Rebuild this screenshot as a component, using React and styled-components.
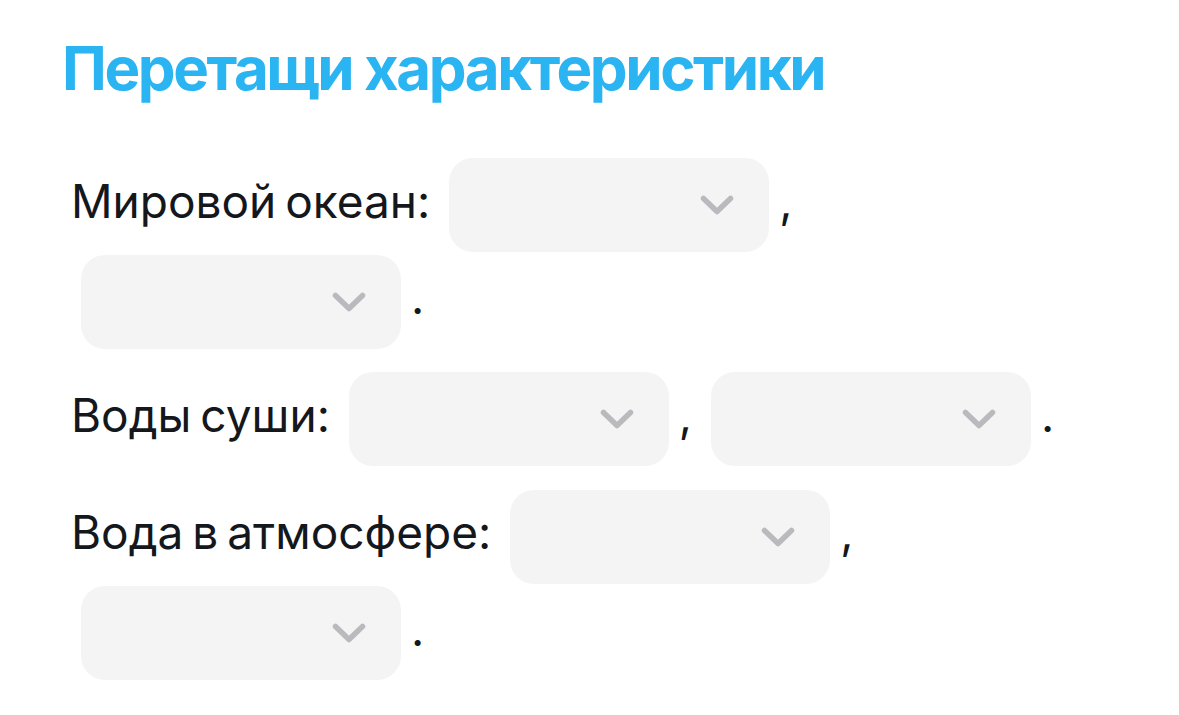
import styled, { createGlobalStyle } from 'styled-components';

const GlobalStyle = createGlobalStyle`
  body {
    margin: 0;
    background: #ffffff;
    font-family: Inter, "Noto Sans", sans-serif;
  }
`
const Page = styled.div`
  padding: 31px 60px 0 60px;
  width: 1040px;
`
const Title = styled.h1`
  margin: 0 0 0 2px;
  font-size: 60px;
  line-height: 74px;
  font-weight: 700;
  letter-spacing: -2.4px;
  color: #2bb4f2;
`
const Exercise = styled.div`
  display: flex;
  flex-direction: column;
  gap: 21px;
  margin-top: 51px;
  padding-left: 11px;
`
const Sentence = styled.p`
  margin: 0;
  font-size: 46px;
  line-height: 90px;
  font-weight: 400;
  word-spacing: -4px;
  color: #14171c;
`
const Slot = styled.span`
  white-space: nowrap;
`
const Select = styled.span`
  display: inline-flex;
  align-items: center;
  justify-content: flex-end;
  box-sizing: border-box;
  width: 320px;
  height: 94px;
  margin: 0 10px;
  padding-right: 35px;
  vertical-align: middle;
  background: #f4f4f5;
  border-radius: 24px;
  cursor: pointer;
`

function Chevron() {
  return (
    <svg width="34" height="20" viewBox="0 0 34 20" fill="none">
      <polyline points="3.5,3.5 17,16.5 30.5,3.5" stroke="#bababe" strokeWidth="5.5" strokeLinecap="round" strokeLinejoin="round" />
    </svg>
  );
}

// a dropdown followed by the punctuation that sticks to it
function Blank({ after }) {
  return (
    <Slot>
      <Select><Chevron /></Select>{after}
    </Slot>
  );
}

const sentences = [
  { label: 'Мировой океан:', blanks: [',', '.'] },
  { label: 'Воды суши:', blanks: [',', '.'] },
  { label: 'Вода в атмосфере:', blanks: [',', '.'] },
];

export default function App() {
  return (
    <>
      <GlobalStyle />
      <Page>
        <Title>Перетащи характеристики</Title>
        <Exercise>
          {sentences.map(s => (
            <Sentence key={s.label}>
              {s.label}{' '}
              {s.blanks.map((p, i) => (
                <span key={i}>
                  <Blank after={p} />{i < s.blanks.length - 1 ? ' ' : ''}
                </span>
              ))}
            </Sentence>
          ))}
        </Exercise>
      </Page>
    </>
  );
}
